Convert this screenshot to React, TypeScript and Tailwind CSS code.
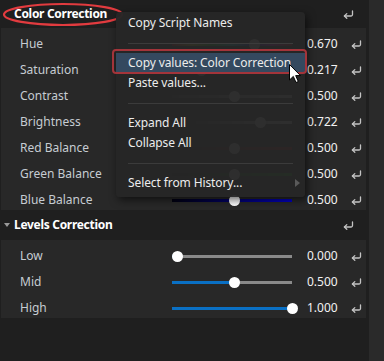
import React from "react";

const ReturnIcon = () => (
  <svg width="11" height="9" viewBox="0 0 11 9" fill="none" stroke="#c4c4c4" strokeWidth="1.3" strokeLinecap="round" strokeLinejoin="round">
    <path d="M9.5 1 V4.5 A1.5 1.5 0 0 1 8 6 H1.5" />
    <path d="M3.8 3.6 L1.4 6 L3.8 8.3" />
  </svg>
);

type Row = { label: string; value: number; track: string; fill?: boolean };

const upper: Row[] = [
  { label: "Hue", value: 0.67, track: "bg-[linear-gradient(90deg,#f00,#ff0,#0f0,#0ff,#00f,#f0f,#f00)]" },
  { label: "Saturation", value: 0.217, track: "bg-[linear-gradient(90deg,#808080,#ff2020)]" },
  { label: "Contrast", value: 0.5, track: "bg-[linear-gradient(90deg,#444,#ddd)]" },
  { label: "Brightness", value: 0.722, track: "bg-[linear-gradient(90deg,#000,#fff)]" },
  { label: "Red Balance", value: 0.5, track: "bg-[linear-gradient(90deg,#000,#d00000)]" },
  { label: "Green Balance", value: 0.5, track: "bg-[linear-gradient(90deg,#000,#00c000)]" },
  { label: "Blue Balance", value: 0.5, track: "bg-[linear-gradient(90deg,#000010,#0000c8)]" },
];

const lower: Row[] = [
  { label: "Low", value: 0, track: "bg-[#8a8a8a]", fill: true },
  { label: "Mid", value: 0.5, track: "bg-[#8a8a8a]", fill: true },
  { label: "High", value: 1, track: "bg-[#8a8a8a]", fill: true },
];

function Slider({ row }: { row: Row }) {
  const center = 5 + row.value * 115;
  return (
    <div className="relative w-[120px] h-[10px]">
      <div className={`absolute left-0 right-0 top-[4px] h-[3px] ${row.track}`} />
      {row.fill && (
        <div className="absolute left-0 top-[4px] h-[3px] bg-[#0a70c4]" style={{ width: center }} />
      )}
      <div
        className="absolute top-0 w-[11px] h-[11px] rounded-full bg-white"
        style={{ left: center - 5.5 }}
      />
    </div>
  );
}

function PropRow({ row }: { row: Row }) {
  return (
    <div className="h-[26px] flex items-center pt-[6px]">
      <div className="w-[171px] pl-[19px] text-[12px] text-[#c6ccd2]">{row.label}</div>
      <Slider row={row} />
      <div className="ml-[15px] w-[40px] text-[12px] text-[#f2f2f2]">{row.value.toFixed(3)}</div>
      <div className="ml-[4px] flex items-center pt-[1px]">
        <ReturnIcon />
      </div>
    </div>
  );
}

function MenuItem({ children, highlight, sub }: { children: React.ReactNode; highlight?: boolean; sub?: boolean }) {
  return (
    <div className={`relative h-[20px] flex items-center pl-[12px] text-[12px] tracking-[-0.1px] text-[#ececec] ${highlight ? "bg-[#34495f]" : ""}`}>
      {highlight && (
        <div className="absolute -left-[4px] -right-[2px] -top-[4px] -bottom-[1px] border-2 border-[#a3343a] rounded-[4px]" />
      )}
      <span className="relative">{children}</span>
      {sub && (
        <svg className="absolute right-[5px] top-[6px]" width="5" height="8" viewBox="0 0 5 8">
          <path d="M0 0 L5 4 L0 8 Z" fill="#5a5a5a" />
        </svg>
      )}
    </div>
  );
}

const Sep = () => (
  <div className="h-[20px] flex items-center px-[12px]">
    <div className="h-px w-full bg-[#3b3b3b]" />
  </div>
);

export default function App() {
  return (
    <div className="relative w-[384px] h-[361px] bg-[#1f1f1f] overflow-hidden font-['Noto_Sans',sans-serif]">
      <div className="flex h-full">
        <div className="w-[369px]">
          <div className="h-[28px] flex items-center">
            <div className="w-[336px] pl-[14px] text-[12px] font-bold tracking-[-0.3px] text-white">Color Correction</div>
            <div className="pl-[7px] flex items-center"><ReturnIcon /></div>
          </div>
          <div className="ml-[1px] w-[365px] h-[182px] bg-[#282828]">
            {upper.map((r) => (
              <PropRow key={r.label} row={r} />
            ))}
          </div>
          <div className="h-[30px] flex items-center">
            <svg className="ml-[4px]" width="6" height="4" viewBox="0 0 6 4">
              <path d="M0 0 H6 L3 4 Z" fill="#9a9a9a" />
            </svg>
            <div className="w-[326px] pl-[4px] text-[12px] font-bold tracking-[-0.3px] text-white">Levels Correction</div>
            <div className="pl-[7px] flex items-center"><ReturnIcon /></div>
          </div>
          <div className="ml-[1px] w-[365px] h-[78px] bg-[#282828]">
            {lower.map((r) => (
              <PropRow key={r.label} row={r} />
            ))}
          </div>
        </div>
        <div className="flex-1 bg-[#2a2a2a]" />
      </div>

      {/* annotation ellipse */}
      <svg className="absolute left-[2px] top-[2px]" width="123" height="25" viewBox="0 0 123 25">
        <ellipse cx="61" cy="12.5" rx="59" ry="10.5" fill="none" stroke="#e23b3f" strokeWidth="2.2" />
      </svg>

      {/* context menu */}
      <div className="absolute left-[116px] top-[12px] w-[189px] h-[185px] rounded-[4px] bg-[#262626]/[0.965] shadow-[2px_3px_8px_rgba(0,0,0,0.6)] pt-[1px]">
        <MenuItem>Copy Script Names</MenuItem>
        <Sep />
        <MenuItem highlight>Copy values: Color Correction</MenuItem>
        <MenuItem>Paste values...</MenuItem>
        <Sep />
        <MenuItem>Expand All</MenuItem>
        <MenuItem>Collapse All</MenuItem>
        <Sep />
        <MenuItem sub>Select from History...</MenuItem>
      </div>

      {/* cursor */}
      <svg className="absolute left-[289px] top-[64px]" width="13" height="20" viewBox="0 0 13 20">
        <path d="M0.5 0.5 L0.5 16 L4.3 12.4 L7 18.5 L9.3 17.5 L6.7 11.6 L11.5 11.6 Z" fill="#fff" stroke="#000" strokeWidth="1" strokeLinejoin="round" />
      </svg>
    </div>
  );
}
